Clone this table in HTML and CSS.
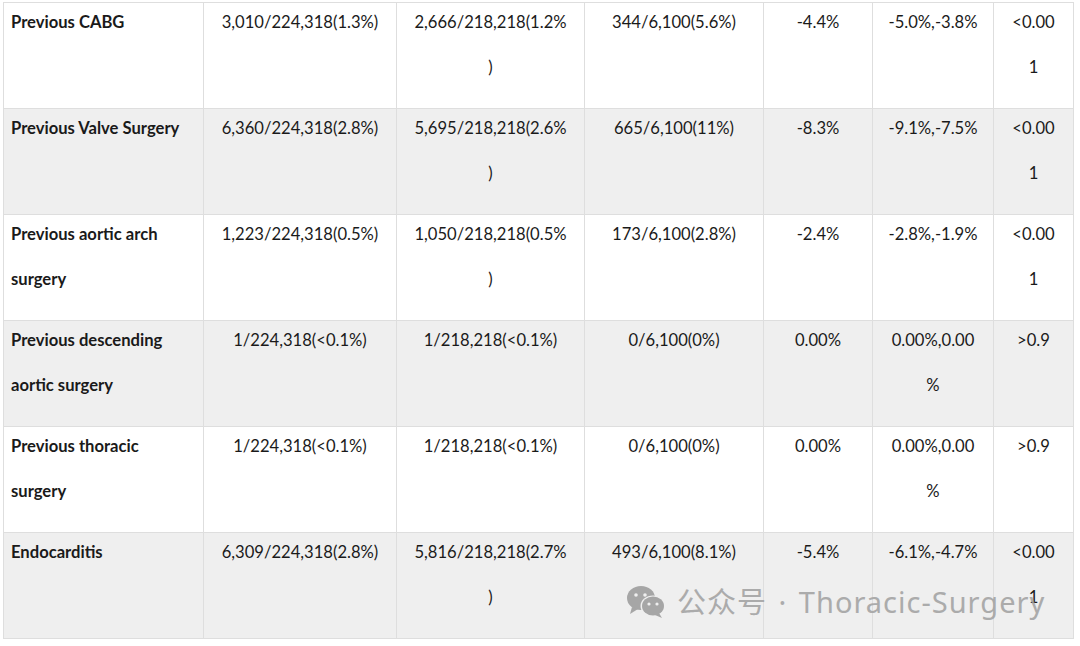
FILE: index.html
```html
<!DOCTYPE html>
<html>
<head>
<meta charset="utf-8">
<link rel="stylesheet" href="styles.css">
</head>
<body>
<div class="page">
<table class="data">
  <colgroup>
    <col class="c1"><col class="c2"><col class="c3"><col class="c4"><col class="c5"><col class="c6"><col class="c7">
  </colgroup>
  <tbody>
    <tr>
      <td class="label"><div class="tx">Previous CABG</div></td>
      <td><div class="tx">3,010/224,318(1.3%)</div></td>
      <td><div class="tx">2,666/218,218(1.2%<br>)</div></td>
      <td><div class="tx">344/6,100(5.6%)</div></td>
      <td><div class="tx">-4.4%</div></td>
      <td><div class="tx">-5.0%,-3.8%</div></td>
      <td><div class="tx">&lt;0.00<br>1</div></td>
    </tr>
    <tr class="alt">
      <td class="label"><div class="tx">Previous Valve Surgery</div></td>
      <td><div class="tx">6,360/224,318(2.8%)</div></td>
      <td><div class="tx">5,695/218,218(2.6%<br>)</div></td>
      <td><div class="tx">665/6,100(11%)</div></td>
      <td><div class="tx">-8.3%</div></td>
      <td><div class="tx">-9.1%,-7.5%</div></td>
      <td><div class="tx">&lt;0.00<br>1</div></td>
    </tr>
    <tr>
      <td class="label"><div class="tx">Previous aortic arch<br>surgery</div></td>
      <td><div class="tx">1,223/224,318(0.5%)</div></td>
      <td><div class="tx">1,050/218,218(0.5%<br>)</div></td>
      <td><div class="tx">173/6,100(2.8%)</div></td>
      <td><div class="tx">-2.4%</div></td>
      <td><div class="tx">-2.8%,-1.9%</div></td>
      <td><div class="tx">&lt;0.00<br>1</div></td>
    </tr>
    <tr class="alt">
      <td class="label"><div class="tx">Previous descending<br>aortic surgery</div></td>
      <td><div class="tx">1/224,318(&lt;0.1%)</div></td>
      <td><div class="tx">1/218,218(&lt;0.1%)</div></td>
      <td><div class="tx">0/6,100(0%)</div></td>
      <td><div class="tx">0.00%</div></td>
      <td><div class="tx">0.00%,0.00<br>%</div></td>
      <td><div class="tx">&gt;0.9</div></td>
    </tr>
    <tr>
      <td class="label"><div class="tx">Previous thoracic<br>surgery</div></td>
      <td><div class="tx">1/224,318(&lt;0.1%)</div></td>
      <td><div class="tx">1/218,218(&lt;0.1%)</div></td>
      <td><div class="tx">0/6,100(0%)</div></td>
      <td><div class="tx">0.00%</div></td>
      <td><div class="tx">0.00%,0.00<br>%</div></td>
      <td><div class="tx">&gt;0.9</div></td>
    </tr>
    <tr class="alt">
      <td class="label"><div class="tx">Endocarditis</div></td>
      <td><div class="tx">6,309/224,318(2.8%)</div></td>
      <td><div class="tx">5,816/218,218(2.7%<br>)</div></td>
      <td><div class="tx">493/6,100(8.1%)</div></td>
      <td><div class="tx">-5.4%</div></td>
      <td><div class="tx">-6.1%,-4.7%</div></td>
      <td><div class="tx">&lt;0.00<br>1</div></td>
    </tr>
  </tbody>
</table>
<div class="watermark">
  <svg class="wm-icon" viewBox="0 0 40 34" width="40" height="34">
    <ellipse cx="15" cy="13" rx="14" ry="12" fill="#9a9a9a"/>
    <path d="M6 22 L4 29 L12 24 Z" fill="#9a9a9a"/>
    <ellipse cx="27" cy="21" rx="12.5" ry="10.5" fill="#f0f0f0"/>
    <ellipse cx="27" cy="21" rx="11" ry="9.5" fill="#9a9a9a"/>
    <path d="M33 28 L36 33 L29 30 Z" fill="#9a9a9a"/>
    <circle cx="10" cy="10" r="1.8" fill="#f0f0f0"/>
    <circle cx="19" cy="10" r="1.8" fill="#f0f0f0"/>
    <circle cx="23" cy="19" r="1.6" fill="#f0f0f0"/>
    <circle cx="31" cy="19" r="1.6" fill="#f0f0f0"/>
  </svg>
  <span class="wm-text">公众号 · Thoracic-Surgery</span>
</div>
</div>
</body>
</html>
```

FILE: styles.css
```css
html, body {
  margin: 0;
  padding: 0;
  background: #ffffff;
}
.page {
  position: relative;
  width: 1080px;
  height: 646px;
  padding: 2px 0 0 3px;
  box-sizing: border-box;
}
.data {
  border-collapse: collapse;
  table-layout: fixed;
  width: 1070px;
  font-family: "Lato", "Liberation Sans", sans-serif;
  font-size: 16.6px;
  color: #1a1a1a;
}
.c1 { width: 200px; }
.c2 { width: 193px; }
.c3 { width: 188px; }
.c4 { width: 179px; }
.c5 { width: 109px; }
.c6 { width: 121px; }
.c7 { width: 80px; }
.data td {
  height: 106px;
  border: 1px solid #dedede;
  vertical-align: top;
  text-align: center;
  padding: 0 2px;
  box-sizing: border-box;
  white-space: nowrap;
}
.data td.label {
  text-align: left;
  font-weight: 700;
  padding-left: 7px;
}
.data tr.alt td {
  background: #efefef;
}
.tx {
  line-height: 45px;
  margin-top: -3px;
}
.watermark {
  position: absolute;
  left: 626px;
  top: 584px;
  display: flex;
  align-items: center;
  gap: 11px;
  opacity: 0.85;
}
.wm-icon {
  display: block;
}
.wm-text {
  font-family: "Noto Sans", "Noto Sans CJK SC", sans-serif;
  font-size: 29px;
  color: #a0a0a0;
  line-height: 36px;
  letter-spacing: 1px;
  word-spacing: 3px;
}
```
